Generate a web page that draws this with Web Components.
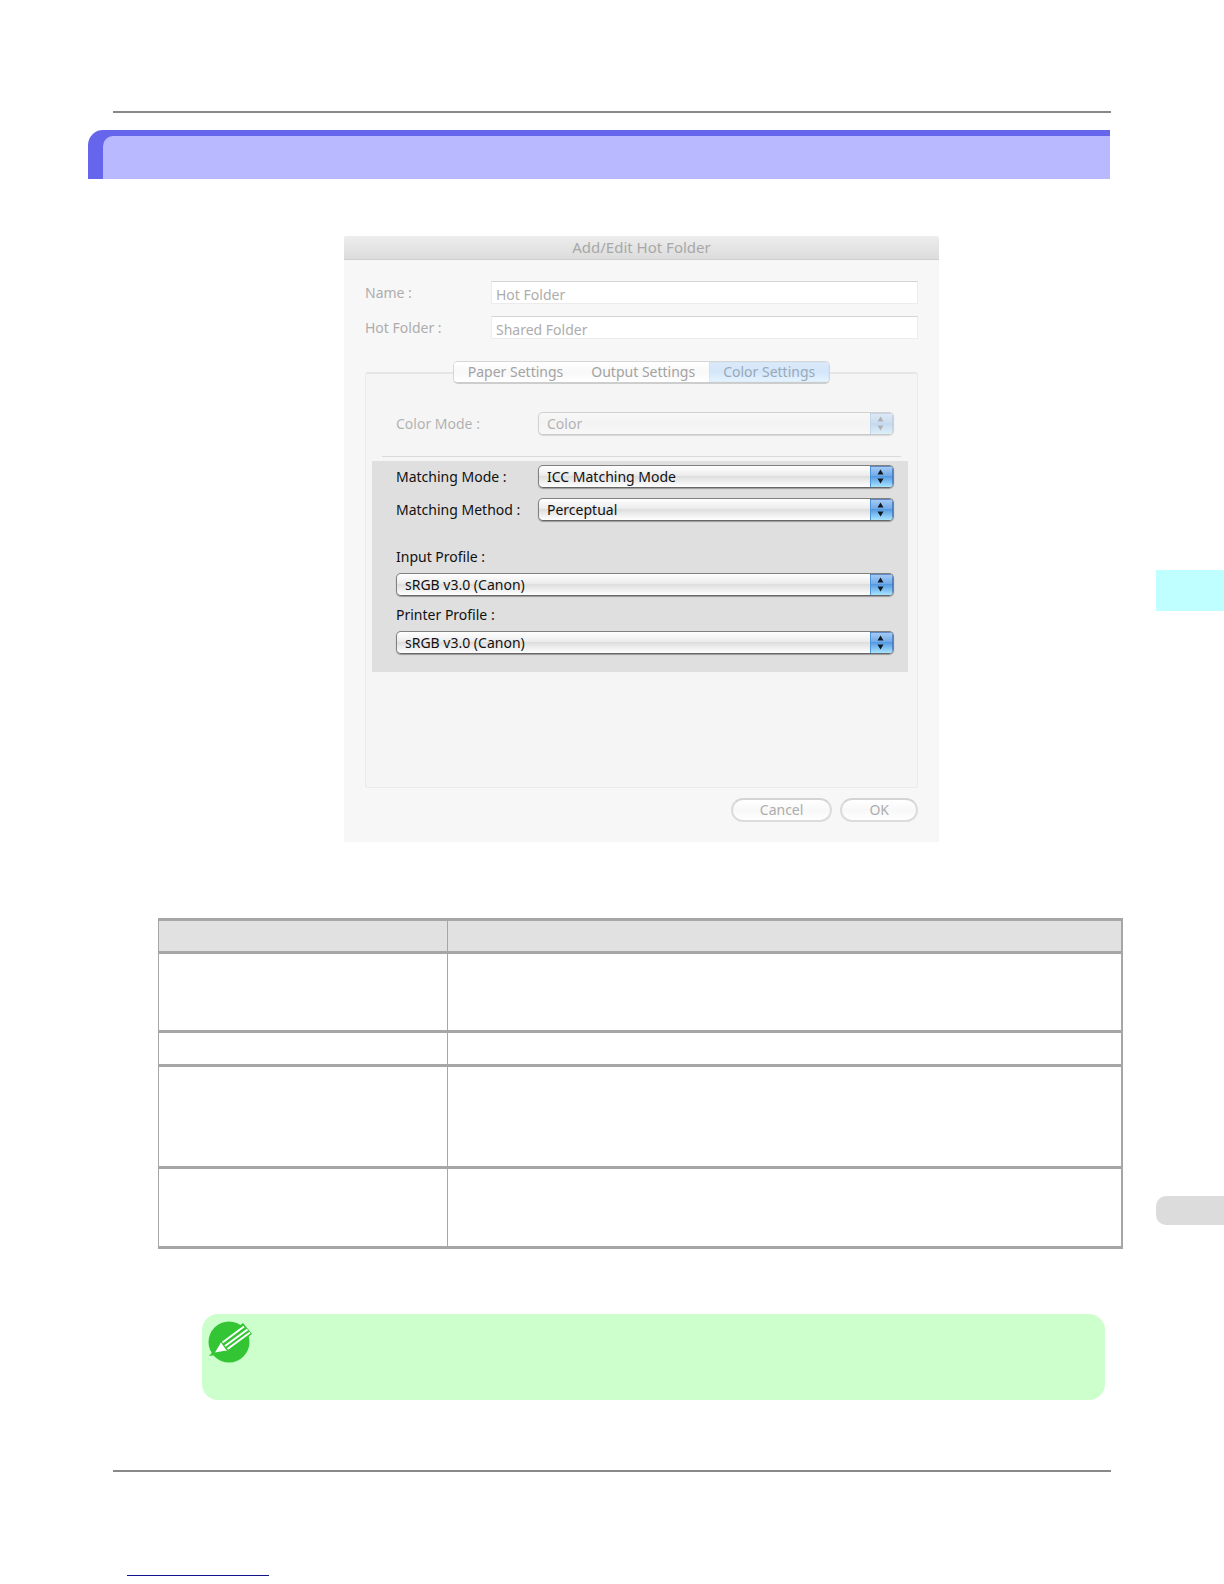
<!DOCTYPE html>
<html lang="en">
<head>
<meta charset="utf-8">
<title>Color Settings</title>
<style>
    body {
        margin: 0;
        background: #fff;
        font: 14px/18px "Noto Sans", "Open Sans", sans-serif;
        color: #111;
    }
</style>
</head>
<body>
<x-manual-page>
    <x-rule></x-rule>
    <x-section-bar></x-section-bar>
    <x-dialog caption="Add/Edit Hot Folder">
        <x-text-field label="Name :" value="Hot Folder"></x-text-field>
        <x-text-field label="Hot Folder :" value="Shared Folder"></x-text-field>
        <x-tab-panel tabs="Paper Settings,Output Settings,Color Settings" active="2">
            <x-popup dim label="Color Mode :" value="Color"></x-popup>
            <x-highlight>
                <x-popup label="Matching Mode :" value="ICC Matching Mode"></x-popup>
                <x-popup label="Matching Method :" value="Perceptual"></x-popup>
                <x-popup stacked label="Input Profile :" value="sRGB v3.0 (Canon)"></x-popup>
                <x-popup stacked label="Printer Profile :" value="sRGB v3.0 (Canon)"></x-popup>
            </x-highlight>
        </x-tab-panel>
        <x-push-button slot="actions" label="Cancel"></x-push-button>
        <x-push-button slot="actions" label="OK"></x-push-button>
    </x-dialog>
    <x-spec-table rows="79,34,102,80"></x-spec-table>
    <x-note></x-note>
    <x-rule></x-rule>
    <x-foot-link></x-foot-link>
    <x-side-tab slot="side" kind="chapter"></x-side-tab>
    <x-side-tab slot="side" kind="page"></x-side-tab>
</x-manual-page>

<script>
{
    // every element only differs in what it renders into its shadow root
    const define = (name, render) => {
        window.customElements.define(name, class extends HTMLElement {
            constructor() {
                super();
                this.shadow = this.attachShadow({ mode: 'open' });
                this.shadow.innerHTML = render(attr => this.getAttribute(attr));
            }
        });
    };

    define('x-manual-page', () => `
        <style>
            :host {
                display: grid;
                grid-template-columns: minmax(0, 1fr) 68px;
            }
            main {
                padding: 111px 33px 8px 88px;
            }
            aside {
                display: flex;
                flex-direction: column;
                gap: 585px;
                padding-top: 570px;
            }
        </style>
        <main><slot></slot></main>
        <aside><slot name="side"></slot></aside>
    `);

    define('x-rule', () => `
        <style>
            :host {
                display: block;
                height: 2px;
                margin: 0 12px 0 25px;
                background: #888;
            }
        </style>
    `);

    define('x-section-bar', () => `
        <style>
            :host {
                display: block;
                margin: 17px 13px 57px 0;
                padding: 6px 0 0 15px;
                border-radius: 15px 0 0 0;
                background: #6666ec;
            }
            div {
                height: 43px;
                border-radius: 10px 0 0 0;
                background: #b9b9ff;
            }
        </style>
        <div></div>
    `);

    define('x-dialog', attr => `
        <style>
            :host {
                display: block;
                padding-left: 72px;
            }
            section {
                max-width: 595px;
                margin: 0 auto;
                background: #f7f7f7;
            }
            header {
                box-sizing: border-box;
                height: 24px;
                border-bottom: 1px solid #cfcfcf;
                border-radius: 3px 3px 0 0;
                background: linear-gradient(#ededed, #dcdcdc);
                color: #a8a8a8;
                font-size: 15px;
                line-height: 23px;
                text-align: center;
            }
            .body {
                display: flex;
                flex-direction: column;
                gap: 12px;
                padding: 21px 21px 0;
            }
            footer {
                display: flex;
                justify-content: flex-end;
                gap: 8px;
                padding: 10px 21px 20px;
            }
        </style>
        <section>
            <header>${attr('caption')}</header>
            <div class="body"><slot></slot></div>
            <footer><slot name="actions"></slot></footer>
        </section>
    `);

    define('x-text-field', attr => `
        <style>
            :host {
                display: grid;
                grid-template-columns: 126px 1fr;
                align-items: center;
                color: #adadad;
            }
            input {
                box-sizing: border-box;
                width: 100%;
                height: 23px;
                margin: 0;
                padding: 4px 4px 0;
                border: 1px solid #ececec;
                border-top-color: #d4d4d4;
                border-radius: 0;
                outline: 0;
                background: #fff;
                color: inherit;
                font: inherit;
            }
        </style>
        <label for="field">${attr('label')}</label>
        <input id="field" type="text" value="${attr('value')}">
    `);

    define('x-tab-panel', attr => `
        <style>
            :host {
                display: block;
                box-sizing: border-box;
                min-height: 416px;
                margin-top: 21px;
                border: 1px solid #ebebeb;
                border-top: 2px solid #e6e6e6;
                border-radius: 3px;
                background: #f5f5f5;
            }
            nav {
                display: flex;
                width: max-content;
                height: 23px;
                box-sizing: border-box;
                margin: -13px auto 28px;
                border: 1px solid #d6d6d6;
                border-bottom: 2px solid #cdcdcd;
                border-radius: 5px;
                overflow: hidden;
                background: #fff;
            }
            button {
                padding: 0 14px;
                border: 0;
                background: linear-gradient(#fff, #f8f8f8 50%, #fff);
                color: #a3a3a3;
                font: inherit;
            }
            button[aria-pressed="true"] {
                background: linear-gradient(#dcebfa, #d3e6fa 50%, #e6f5ff);
                box-shadow: inset 0 0 1px #8eabc9;
                color: #9aa9b8;
            }
        </style>
        <nav>
            ${attr('tabs').split(',').map((tab, i) => (`
                <button type="button" aria-pressed="${i === Number(attr('active'))}">${tab}</button>
            `)).join('')}
        </nav>
        <slot></slot>
    `);

    define('x-popup', attr => `
        <style>
            :host {
                display: grid;
                grid-template-columns: 142px 1fr;
                align-items: center;
                margin: 0 23px 0 30px;
            }
            :host([stacked]) {
                grid-template-columns: 1fr;
                row-gap: 7px;
            }
            :host([dim]) {
                opacity: 0.3;
            }
            .box {
                display: grid;
                grid-template-columns: 1fr 23px;
                box-sizing: border-box;
                height: 23px;
                border: 1px solid #808080;
                border-bottom-color: #666;
                border-radius: 5px;
                overflow: hidden;
                background: linear-gradient(#fff, #ececec 45%, #dedede 50%, #fff);
                box-shadow: 0 1px 1px #999;
            }
            :host([dim]) .box {
                background: linear-gradient(#fff, #f0f0f0 50%, #fff);
            }
            select {
                grid-area: 1 / 1 / 2 / 3;
                width: 100%;
                height: 21px;
                padding: 0 24px 0 8px;
                border: 0;
                outline: 0;
                appearance: none;
                background: none;
                color: inherit;
                font: inherit;
            }
            svg {
                grid-area: 1 / 2;
                pointer-events: none;
            }
        </style>
        <label for="choice">${attr('label')}</label>
        <div class="box">
            <svg width="23" height="21" viewBox="0 0 23 21">
                <defs>
                    <linearGradient id="cap" x1="0" y1="0" x2="0" y2="1">
                        <stop offset="0" stop-color="#a9cdf3"/>
                        <stop offset="0.45" stop-color="#74acea"/>
                        <stop offset="0.5" stop-color="#569be2"/>
                        <stop offset="1" stop-color="#a8e4ff"/>
                    </linearGradient>
                </defs>
                <rect width="23" height="21" fill="url(#cap)"/>
                <path d="M0.5 0V21" stroke="#4b94d8"/>
                <path d="M0 0.5H23M22.5 0V21" stroke="#4170b4" opacity="0.7"/>
                <path d="M10.500 3.500L13.500 8.500H7.500ZM10.500 17.500L13.500 12.500H7.500Z" fill="#101820"/>
            </svg>
            <select id="choice"><option>${attr('value')}</option></select>
        </div>
    `);

    define('x-highlight', () => `
        <style>
            :host {
                display: block;
                margin-top: 21px;
            }
            hr {
                height: 1px;
                margin: 0 16px 4px;
                border: 0;
                background: #dadada;
            }
            div {
                display: grid;
                gap: 10px;
                margin: 0 9px 0 6px;
                padding: 4px 0 18px;
                background: #dfdfdf;
            }
            ::slotted(*) {
                margin: 0 14px 0 24px;
            }
            ::slotted([stacked]:nth-child(3)) {
                margin-top: 17px;
            }
        </style>
        <hr>
        <div><slot></slot></div>
    `);

    define('x-push-button', attr => `
        <style>
            :host {
                display: block;
            }
            button {
                min-width: 76px;
                height: 24px;
                padding: 0 27px;
                border: 2px solid #dcdcdc;
                border-top-color: #d4d4d4;
                border-radius: 12px;
                background: linear-gradient(#fff, #f8f8f8 50%, #fff);
                color: #adadad;
                font: inherit;
                line-height: 18px;
            }
        </style>
        <button type="button">${attr('label')}</button>
    `);

    define('x-spec-table', attr => `
        <style>
            :host {
                display: block;
                margin: 76px 0 65px 70px;
            }
            table {
                width: 100%;
                table-layout: fixed;
                border-spacing: 0;
                border: solid #a6a6a6;
                border-width: 0 1px 3px 0;
            }
            th, td {
                box-sizing: border-box;
                padding: 0;
                border: solid #a6a6a6;
                border-width: 3px 0 0 1px;
            }
            th:last-child, td:last-child {
                border-right-width: 1px;
            }
            th {
                height: 33px;
                background: #e1e1e1;
            }
            th:first-child {
                width: 30%;
            }
        </style>
        <table>
            <thead>
                <tr><th></th><th></th></tr>
            </thead>
            <tbody>
                ${attr('rows').split(',').map(height => (`
                    <tr style="height: ${height}px"><td></td><td></td></tr>
                `)).join('')}
            </tbody>
        </table>
    `);

    define('x-note', () => `
        <style>
            :host {
                display: block;
                box-sizing: border-box;
                min-height: 86px;
                margin: 0 18px 70px 114px;
                padding: 6px;
                border-radius: 16px;
                background: #ccffcc;
            }
            svg {
                display: block;
            }
        </style>
        <svg width="44" height="44" viewBox="0 0 44 44">
            <circle cx="21" cy="22" r="20.500" fill="#33c533"/>
            <path d="M1 36L8 28L15 34Z" fill="#33c533"/>
            <path d="M13 20L35 3L44 14L22 31Z" fill="#33c533"/>
            <path d="M7 32.500L13 22.500L18 30.500Z" fill="#fff"/>
            <path d="M14.500 22.500L36 6.500M17 26L39.500 9.500M19.500 29L42 12.500" stroke="#fff" stroke-width="2"/>
            <path d="M12.500 23L18.500 31" stroke="#fff" stroke-width="1"/>
        </svg>
    `);

    define('x-foot-link', () => `
        <style>
            :host {
                display: block;
                margin: 85px 0 0 39px;
            }
            a {
                display: block;
                width: 142px;
                height: 18px;
                border-bottom: 1px solid #14148a;
            }
        </style>
        <a href="#" aria-label="Contents"></a>
    `);

    define('x-side-tab', () => `
        <style>
            :host {
                display: block;
                height: 41px;
                background: #bfffff;
            }
            :host([kind="page"]) {
                height: 29px;
                border-radius: 10px 0 0 10px;
                background: #dcdcdc;
            }
        </style>
    `);
}
</script>
</body>
</html>
